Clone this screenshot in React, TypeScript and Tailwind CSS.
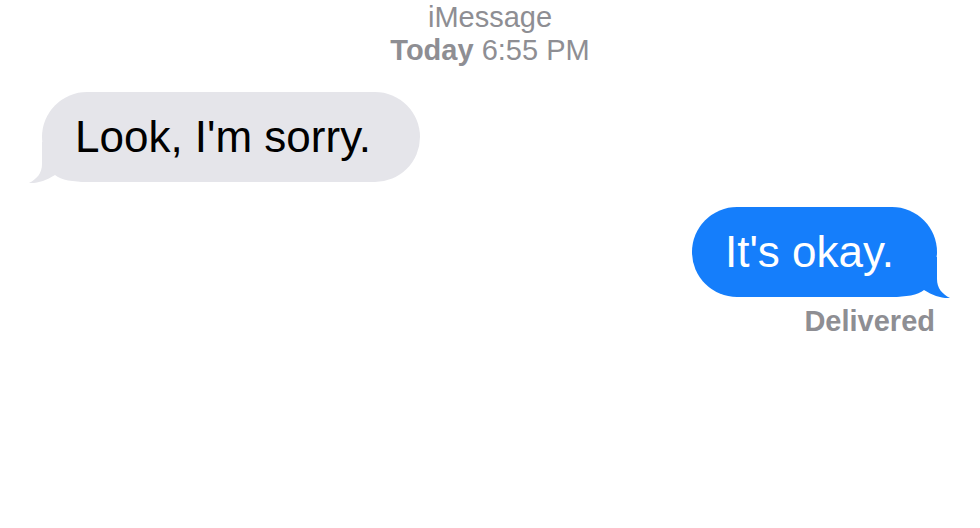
import React from 'react';

/* ── Bubble tail (drawn for the left side, mirrored for the right) ── */
const Tail: React.FC<{ color: string; side: 'left' | 'right' }> = ({ color, side }) => (
    <svg
        width="60"
        height="42"
        viewBox="0 0 60 42"
        className={
            side === 'left'
                ? 'absolute left-[-14px] bottom-[-2px]'
                : 'absolute right-[-14px] bottom-[-2px] -scale-x-100'
        }
    >
        <path
            d="M14,0 L14,22 C14,31 9,37 1,41 C10,41.5 18,38.5 27,33 C33,38 45,40 60,40 L60,0 Z"
            fill={color}
        />
    </svg>
);

export default function App() {
    return (
        <div className="w-[980px] h-[528px] bg-white overflow-hidden font-['Liberation_Sans',Arial,sans-serif]">
            {/* Header */}
            <div className="flex flex-col items-center text-[#8e8e93] text-[29px] leading-[33px] pt-[1px]">
                <span>iMessage</span>
                <span>
                    <span className="font-bold">Today</span> 6:55 PM
                </span>
            </div>

            {/* Incoming */}
            <div className="flex pl-[42px] mt-[25px]">
                <div className="relative h-[90px] w-[378px] rounded-full bg-[#e5e5ea] flex items-center pl-[33px]">
                    <Tail color="#e5e5ea" side="left" />
                    <span className="relative text-[44px] leading-none text-black">Look, I'm sorry.</span>
                </div>
            </div>

            {/* Outgoing */}
            <div className="flex flex-col items-end pr-[43px] mt-[25px]">
                <div className="relative h-[90px] w-[245px] rounded-full bg-[#157efb] flex items-center pl-[33px]">
                    <Tail color="#157efb" side="right" />
                    <span className="relative text-[44px] leading-none text-white">It's okay.</span>
                </div>
                <span className="mt-[8px] mr-[2px] text-[29px] leading-[32px] font-bold text-[#8e8e93]">Delivered</span>
            </div>
        </div>
    );
}
